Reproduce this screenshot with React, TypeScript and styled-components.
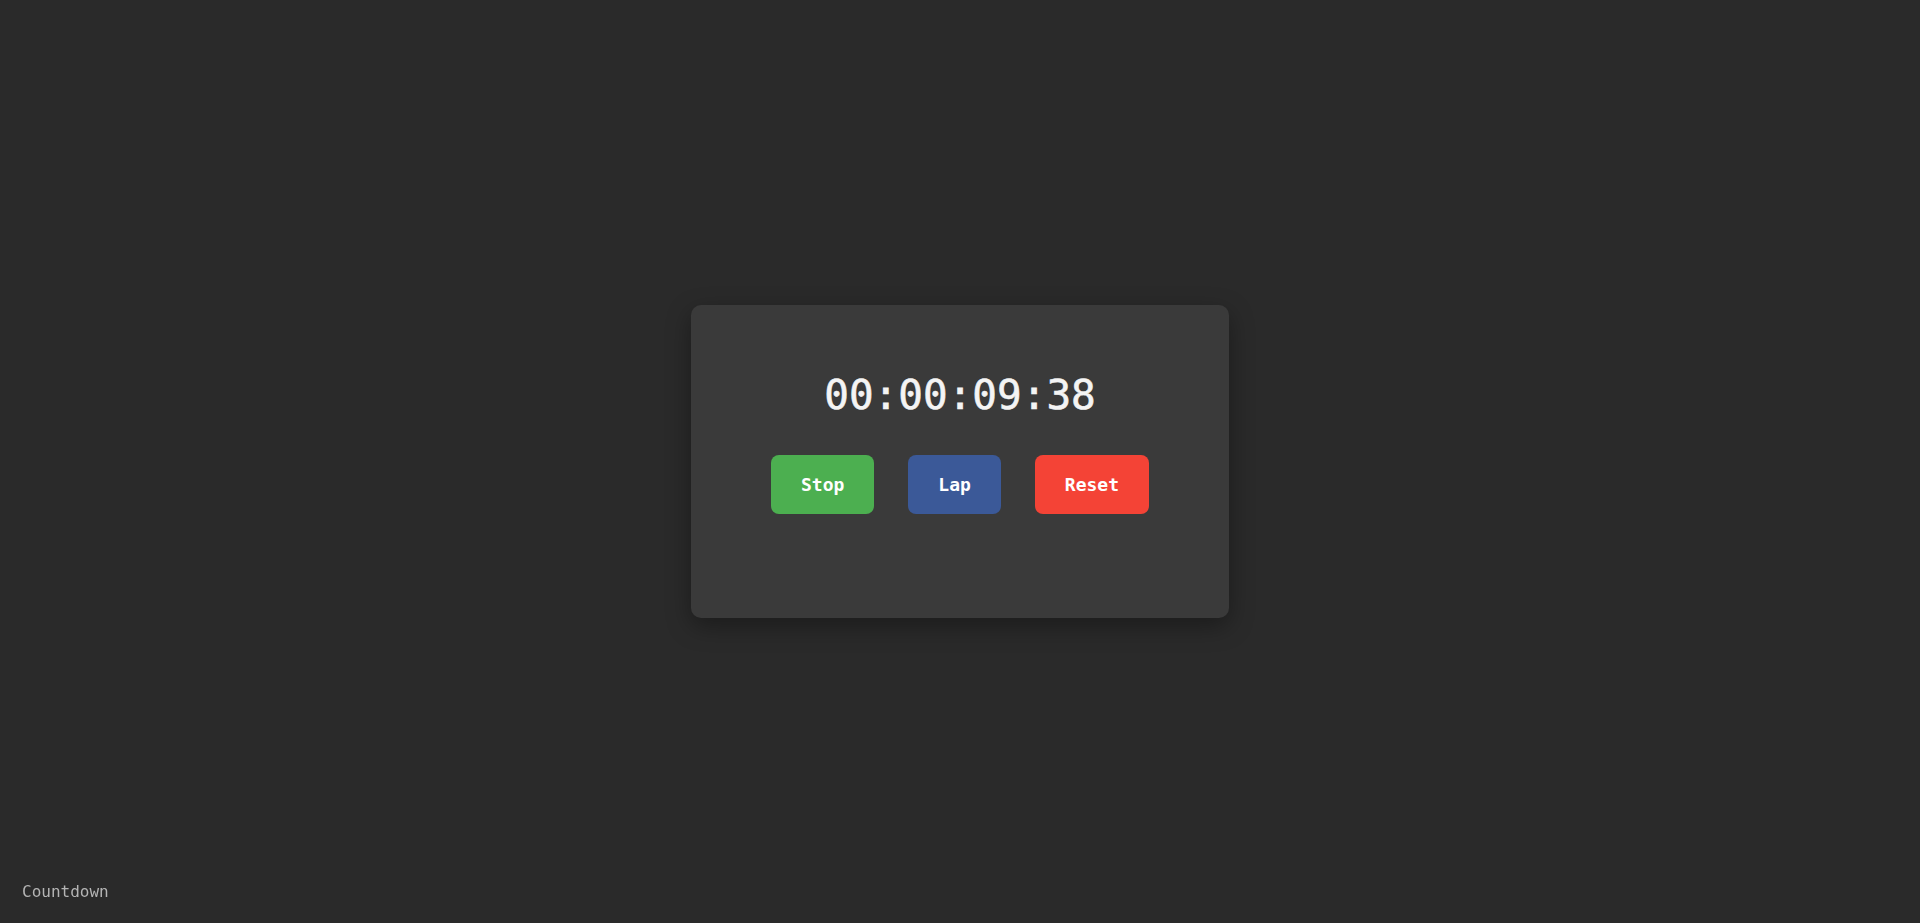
import React from "react";
import styled, { createGlobalStyle } from "styled-components";

const GlobalStyle = createGlobalStyle`
  html, body {
    margin: 0;
    padding: 0;
    background: #2a2a2a;
  }
  body {
    font-family: "DejaVu Sans Mono", "Liberation Mono", monospace;
    color: #f0f0f0;
  }
`;

const Page = styled.main`
  min-height: 100vh;
  display: flex;
  align-items: center;
  justify-content: center;
  background: #2a2a2a;
`;

const Card = styled.section`
  box-sizing: border-box;
  width: 538px;
  height: 313px;
  padding: 66px 40px 0;
  background: #3a3a3a;
  border-radius: 10px;
  box-shadow: 0 8px 24px rgba(0, 0, 0, 0.35);
  display: flex;
  flex-direction: column;
  align-items: center;
`;

const Display = styled.div`
  font-size: 41px;
  font-weight: normal;
  color: #f4f4f4;
  line-height: 48px;
  margin-bottom: 36px;
  -webkit-text-stroke: 0.6px #f4f4f4;
`;

const Controls = styled.div`
  display: flex;
  gap: 34px;
`;

const Button = styled.button<{ $bg: string }>`
  font-family: "DejaVu Sans Mono", "Liberation Mono", monospace;
  font-size: 18px;
  font-weight: bold;
  line-height: 21px;
  padding: 19px 30px;
  border: none;
  border-radius: 8px;
  color: #ffffff;
  background: ${(p) => p.$bg};
  cursor: pointer;
`;

const CornerLink = styled.a`
  position: fixed;
  left: 22px;
  bottom: 22px;
  font-size: 16px;
  color: #b4b4b4;
  text-decoration: none;
`;

export default function App() {
  return (
    <>
      <GlobalStyle />
      <Page>
        <Card>
          <Display>00:00:09:38</Display>
          <Controls>
            <Button $bg="#4caf50">Stop</Button>
            <Button $bg="#3b5998">Lap</Button>
            <Button $bg="#f44336">Reset</Button>
          </Controls>
        </Card>
      </Page>
      <CornerLink href="#">Countdown</CornerLink>
    </>
  );
}
